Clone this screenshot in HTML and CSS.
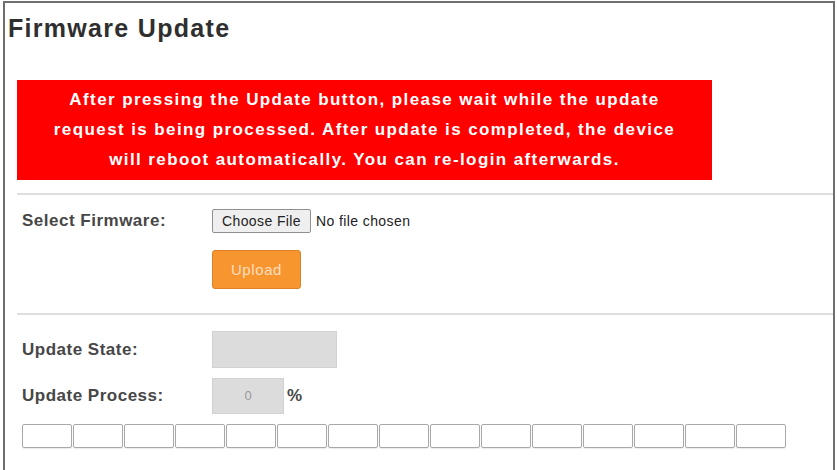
FILE: index.html
```html
<!DOCTYPE html>
<html lang="en">

<head>
    <meta charset="UTF-8">
    <meta name="viewport" content="width=device-width, initial-scale=1.0">
    <title>Firmware Update</title>
    <link rel="stylesheet" href="styles.css">
</head>

<body>

    <div class="panel">
        <h1 class="title">Firmware Update</h1>

        <div class="content">
            <!-- Warning -->
            <p class="notice">
                After pressing the Update button, please wait while the update<br>
                request is being processed. After update is completed, the device<br>
                will reboot automatically. You can re-login afterwards.
            </p>

            <hr class="divider">

            <!-- Upload -->
            <div class="form-row row-file">
                <span class="label">Select Firmware:</span>
                <div class="file-field">
                    <span class="file-btn">Choose File</span>
                    <span class="file-name">No file chosen</span>
                </div>
            </div>
            <div class="form-row row-upload">
                <span></span>
                <button class="upload-btn" type="button">Upload</button>
            </div>

            <hr class="divider divider-low">

            <!-- Status -->
            <div class="form-row row-state">
                <span class="label">Update State:</span>
                <div class="field state-field"></div>
            </div>
            <div class="form-row row-process">
                <span class="label">Update Process:</span>
                <div class="field-group">
                    <div class="field process-field">0</div>
                    <span class="unit">%</span>
                </div>
            </div>

            <div class="progress">
                <span class="cell"></span><span class="cell"></span><span class="cell"></span>
                <span class="cell"></span><span class="cell"></span><span class="cell"></span>
                <span class="cell"></span><span class="cell"></span><span class="cell"></span>
                <span class="cell"></span><span class="cell"></span><span class="cell"></span>
                <span class="cell"></span><span class="cell"></span><span class="cell"></span>
            </div>
        </div>
    </div>

</body>
</html>
```

FILE: styles.css
```css
/* Reset */
* {
    margin: 0;
    padding: 0;
    box-sizing: border-box;
}

body {
    margin: 1px 2px 0 3px;
    font-family: "Liberation Sans", Arial, sans-serif;
    color: #333;
    background-color: #fff;
    overflow: hidden;
}

/* Outer frame */
.panel {
    border: 2px solid #6e6e6e;
    border-bottom: none;
    height: 480px;
}

.title {
    margin: 10px 0 0 3px;
    font-size: 25px;
    line-height: 30px;
    letter-spacing: 1.3px;
    font-weight: bold;
    color: #2f2f2f;
}

.content {
    margin: 37px 0 0 12px;
}

/* Red warning box */
.notice {
    width: 695px;
    padding: 5px 0;
    background-color: #fe0000;
    color: #fff;
    font-size: 17px;
    font-weight: bold;
    line-height: 30px;
    letter-spacing: 1.4px;
    text-align: center;
}

.divider {
    border: none;
    height: 2px;
    background-color: #dedede;
    margin-top: 13px;
}

.divider-low {
    margin-top: 24px;
}

/* Form rows */
.form-row {
    display: grid;
    grid-template-columns: 190px auto;
    align-items: center;
    padding-left: 5px;
}

.label {
    font-size: 17px;
    font-weight: bold;
    letter-spacing: 0.5px;
    color: #474747;
}

.row-file {
    margin-top: 14px;
}

.row-upload {
    margin-top: 17px;
}

.row-state {
    margin-top: 16px;
}

.row-process {
    margin-top: 10px;
}

.file-field {
    display: flex;
    align-items: center;
    gap: 5px;
    font-size: 14px;
    letter-spacing: 0.4px;
    color: #222;
}

.file-btn {
    width: 99px;
    height: 24px;
    line-height: 22px;
    text-align: center;
    background-color: #efefef;
    border: 1px solid #8f8f8f;
    border-radius: 2px;
}

.upload-btn {
    width: 89px;
    height: 39px;
    background-color: #f7952f;
    border: 1px solid #dd8128;
    border-radius: 3px;
    color: rgba(255, 255, 255, 0.7);
    font-family: inherit;
    font-size: 15px;
    letter-spacing: 0.6px;
}

.field {
    background-color: #dcdcdc;
    border: 1px solid #d2d2d2;
}

.state-field {
    width: 125px;
    height: 37px;
}

.field-group {
    display: flex;
    align-items: center;
    gap: 3px;
}

.process-field {
    width: 72px;
    height: 36px;
    line-height: 34px;
    text-align: center;
    font-size: 13px;
    color: #9a9a9a;
}

.unit {
    font-size: 17px;
    font-weight: bold;
    color: #474747;
}

/* Progress cells */
.progress {
    display: flex;
    gap: 1px;
    margin: 10px 0 0 5px;
}

.cell {
    width: 50px;
    height: 24px;
    border: 1px solid #a8a8a8;
    border-radius: 2px;
    box-shadow: 0 1px 1px rgba(0, 0, 0, 0.08);
}
```
